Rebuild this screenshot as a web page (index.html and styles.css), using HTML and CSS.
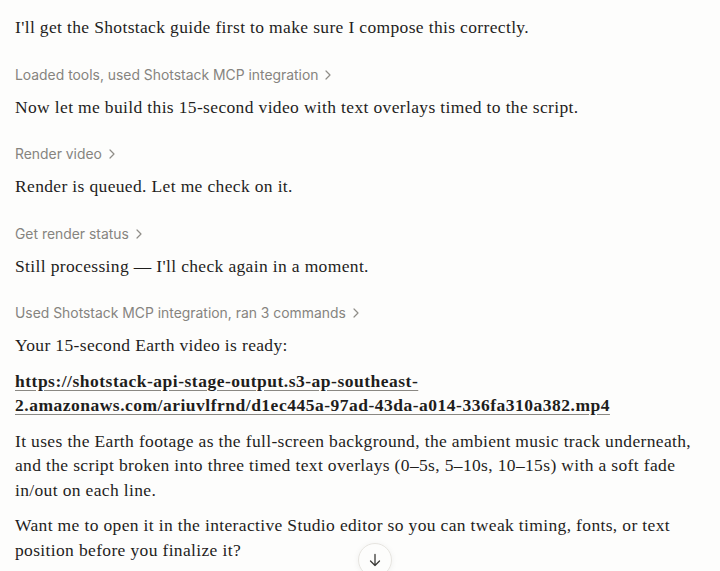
FILE: index.html
```html
<!DOCTYPE html>
<html lang="en">
<head>
  <meta charset="UTF-8" />
  <meta name="viewport" content="width=device-width, initial-scale=1.0" />
  <title>Shotstack render</title>
  <link rel="stylesheet" href="styles.css">
</head>
<body>
  <div class="thread">
    <p>I'll get the Shotstack guide first to make sure I compose this correctly.</p>

    <div class="tool-step">Loaded tools, used Shotstack MCP integration
      <svg class="chev" viewBox="0 0 8 12" width="8" height="12"><path d="M2 2l4 4-4 4" /></svg>
    </div>
    <p>Now let me build this 15-second video with text overlays timed to the script.</p>

    <div class="tool-step">Render video
      <svg class="chev" viewBox="0 0 8 12" width="8" height="12"><path d="M2 2l4 4-4 4" /></svg>
    </div>
    <p>Render is queued. Let me check on it.</p>

    <div class="tool-step">Get render status
      <svg class="chev" viewBox="0 0 8 12" width="8" height="12"><path d="M2 2l4 4-4 4" /></svg>
    </div>
    <p>Still processing — I'll check again in a moment.</p>

    <div class="tool-step">Used Shotstack MCP integration, ran 3 commands
      <svg class="chev" viewBox="0 0 8 12" width="8" height="12"><path d="M2 2l4 4-4 4" /></svg>
    </div>
    <p>Your 15-second Earth video is ready:</p>
    <p><a class="link" href="#">https://shotstack-api-stage-output.s3-ap-southeast-<br>2.amazonaws.com/ariuvlfrnd/d1ec445a-97ad-43da-a014-336fa310a382.mp4</a></p>
    <p>It uses the Earth footage as the full-screen background, the ambient music track underneath, and the script broken into three timed text overlays (0–5s, 5–10s, 10–15s) with a soft fade in/out on each line.</p>
    <p>Want me to open it in the interactive Studio editor so you can tweak timing, fonts, or text position before you finalize it?</p>
  </div>

  <button class="scroll-down" aria-label="Scroll to bottom">
    <svg viewBox="0 0 16 16" width="16" height="16"><path d="M8 2.5v11M3.5 9L8 13.5 12.5 9" /></svg>
  </button>
</body>
</html>
```

FILE: styles.css
```css
* {
  margin: 0;
  padding: 0;
  box-sizing: border-box;
}

body {
  background: #fdfdfc;
  color: #1f1e1c;
  font-family: 'Liberation Serif', 'Times New Roman', serif;
  font-size: 17.5px;
  line-height: 24.5px;
  height: 100vh;
  overflow: hidden;
}

.thread {
  display: flex;
  flex-direction: column;
  gap: 11px;
  padding: 15px 15px 0 15px;
  width: 720px;
}

.thread p {
  letter-spacing: 0.35px;
}

/* tool call summaries sit a touch lower, closer to the reply below */
.tool-step {
  margin-top: 14px;
  margin-bottom: -1px;
  font-family: 'Inter', 'Liberation Sans', sans-serif;
  font-size: 13.9px;
  line-height: 20px;
  color: #86847f;
  display: flex;
  align-items: center;
  gap: 6px;
}

.chev path {
  fill: none;
  stroke: #8f8d88;
  stroke-width: 1.2;
  stroke-linecap: round;
  stroke-linejoin: round;
}

.link {
  color: #1f1e1c;
  font-weight: 700;
  letter-spacing: 0.5px;
  text-decoration: underline;
  text-decoration-color: #8a8883;
  text-underline-offset: 3px;
}

.scroll-down {
  position: fixed;
  left: 358px;
  top: 543px;
  width: 34px;
  height: 34px;
  border-radius: 50%;
  background: #fdfdfc;
  border: 1px solid #e6e4df;
  box-shadow: 0 1px 6px rgba(0, 0, 0, 0.06);
  display: flex;
  align-items: center;
  justify-content: center;
}

.scroll-down path {
  fill: none;
  stroke: #3b3a37;
  stroke-width: 1.3;
  stroke-linecap: round;
  stroke-linejoin: round;
}
```
